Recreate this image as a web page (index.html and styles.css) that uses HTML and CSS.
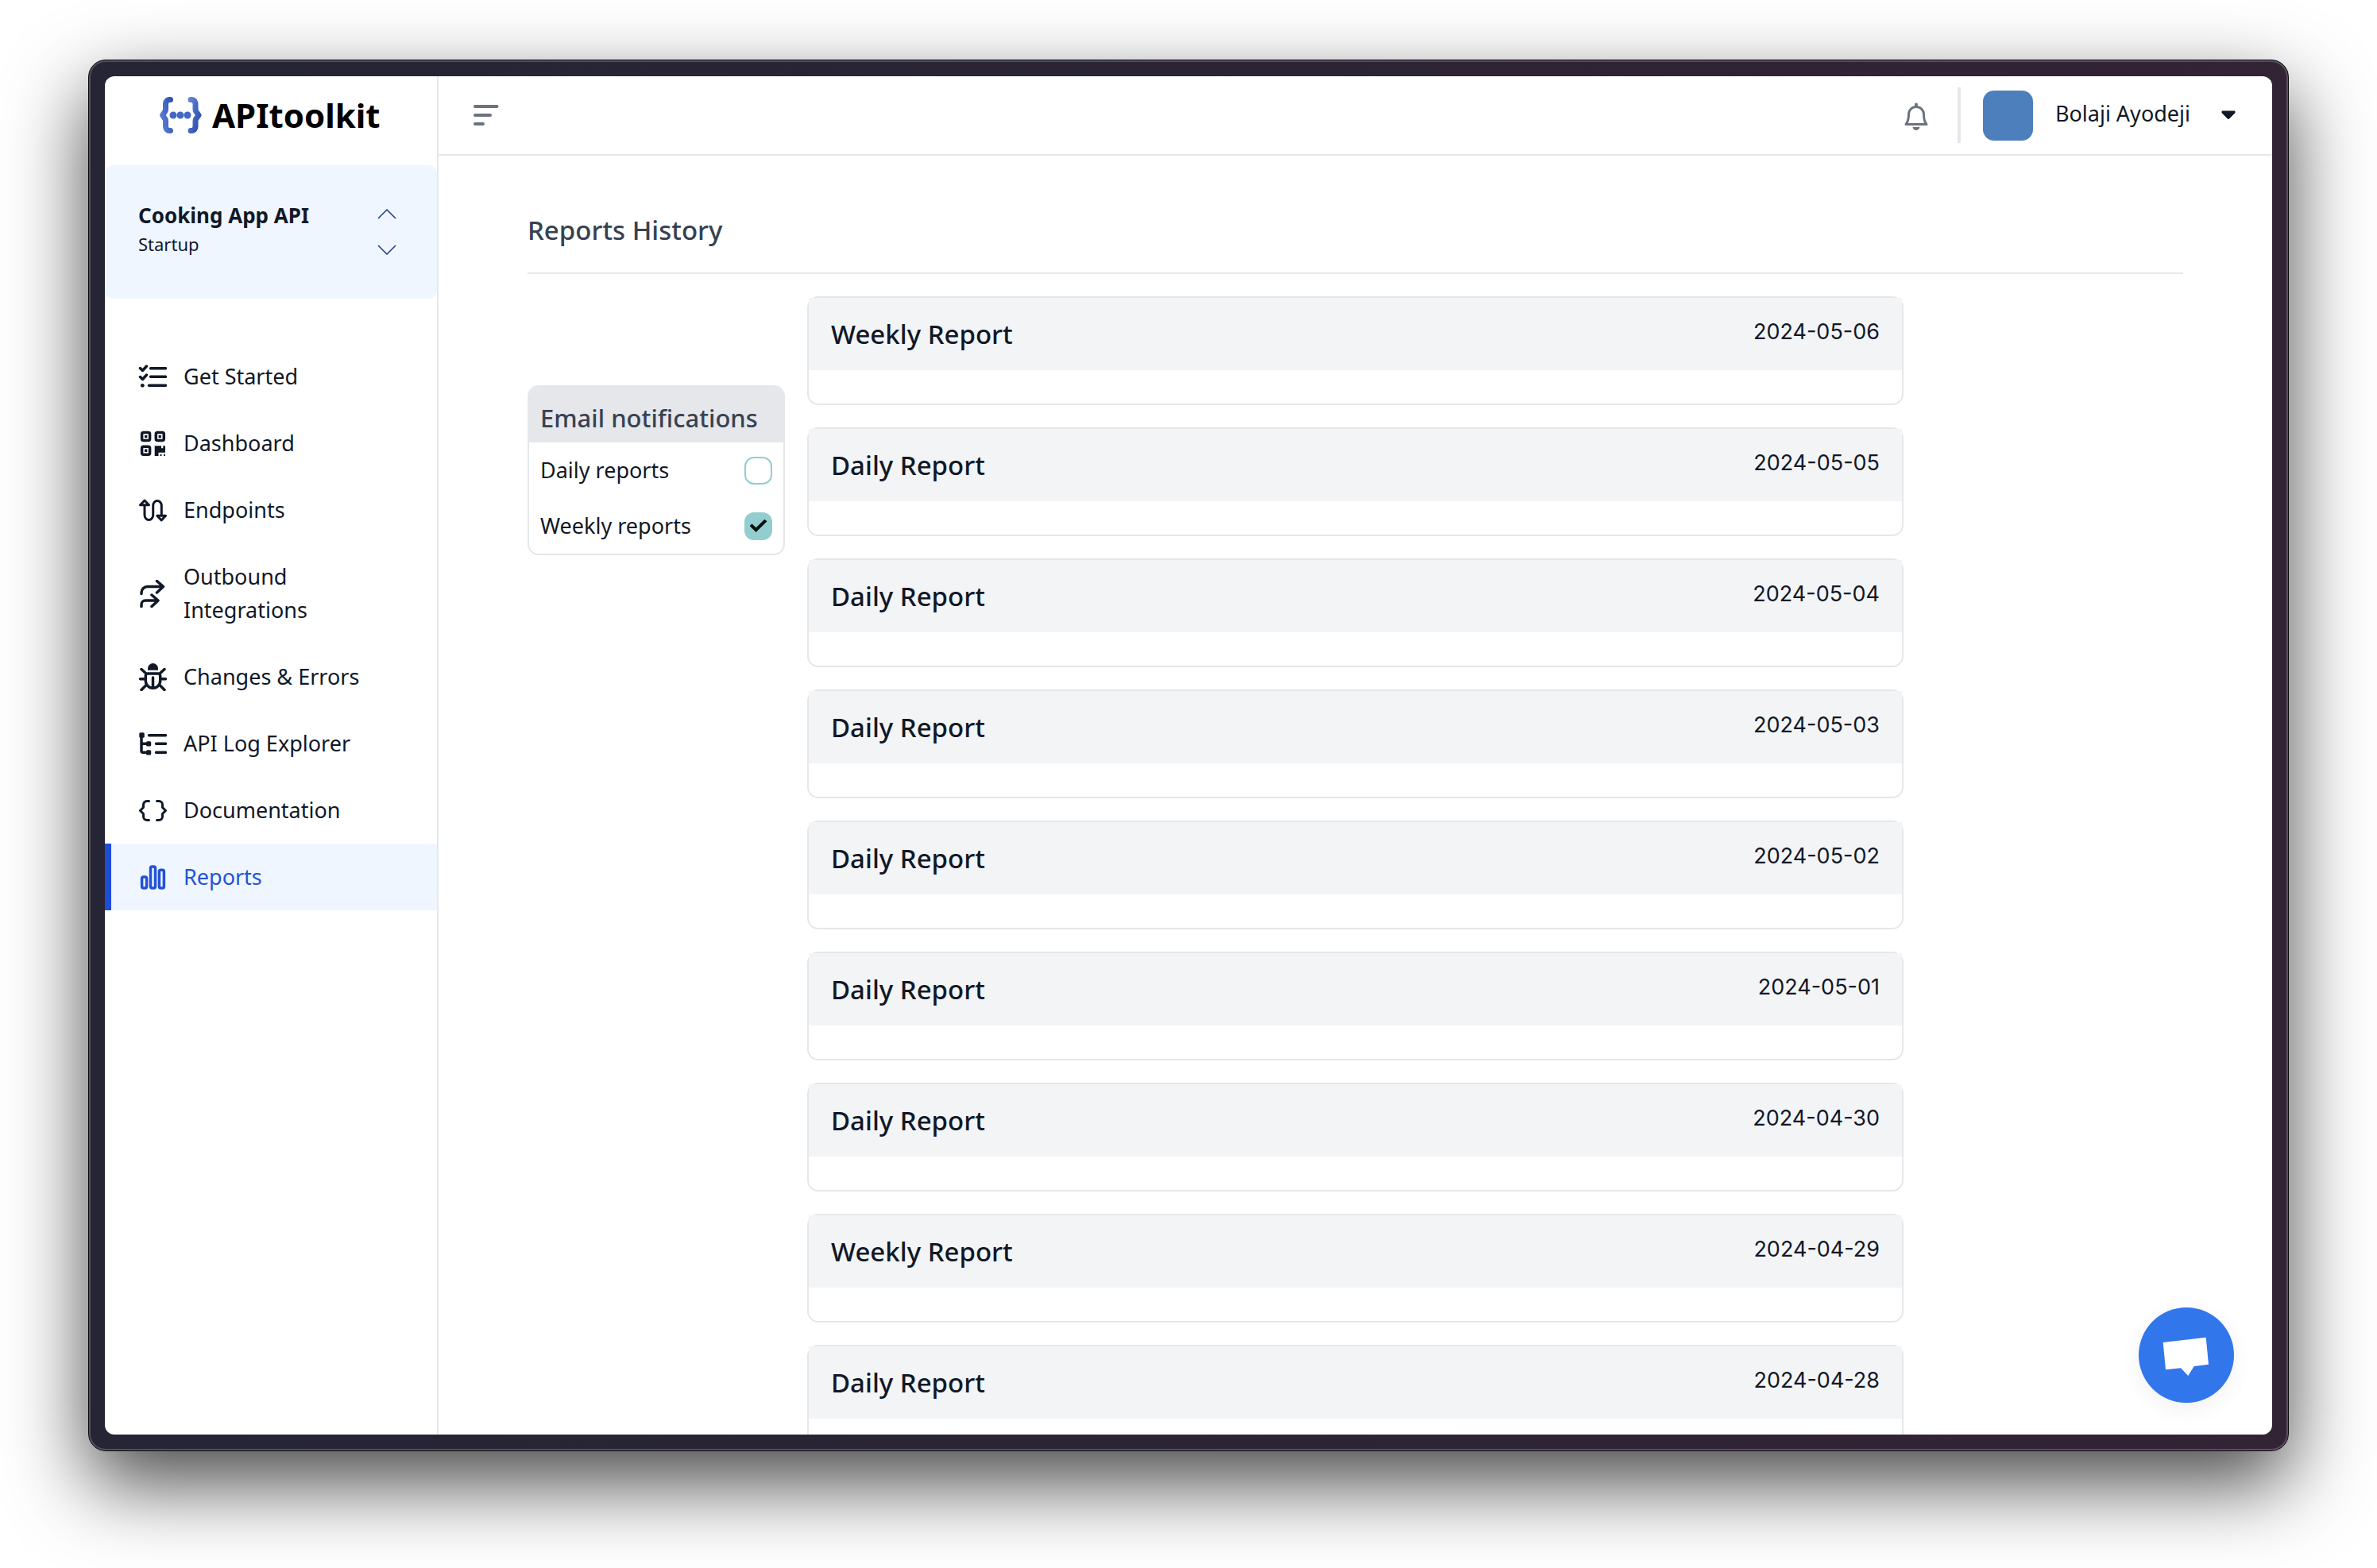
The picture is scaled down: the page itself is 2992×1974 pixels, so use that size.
FILE: index.html
```html
<!DOCTYPE html>
<html lang="en">
<head>
<meta charset="utf-8">
<title>APItoolkit – Reports History</title>
<link rel="stylesheet" href="styles.css">
</head>
<body>
<div class="frame">
<div class="app">
  <aside class="sidebar">
    <a class="logo" href="#">
      <svg class="logo-mark" viewBox="0 0 54 48" fill="none" aria-hidden="true">
        <defs>
          <linearGradient id="brandLeft" gradientUnits="userSpaceOnUse" x1="0" y1="24" x2="20" y2="20"><stop offset="0" stop-color="#5f80d4"/><stop offset="1" stop-color="#2c50b0"/></linearGradient>
          <linearGradient id="brandRight" gradientUnits="userSpaceOnUse" x1="34" y1="20" x2="54" y2="26"><stop offset="0" stop-color="#6283d6"/><stop offset="1" stop-color="#2c50b0"/></linearGradient>
        </defs>
        <path d="M14.5 4.500h-1c-3.500 0-5 2.500-5 5.500v6.500c0 2-.5 3-1.500 4L4.500 24 7 27.500c1 1 1.500 2 1.500 4V38c0 3 1.500 5.500 5 5.500h1" stroke="url(#brandLeft)" stroke-width="7" stroke-linecap="round" stroke-linejoin="round"/>
        <path d="M40 4.500h1c3.500 0 5 2.500 5 5.500v6.500c0 2 .5 3 1.500 4L50 24l-2.500 3.500c-1 1-1.500 2-1.500 4V38c0 3-1.500 5.500-5 5.500h-1" stroke="url(#brandRight)" stroke-width="7" stroke-linecap="round" stroke-linejoin="round"/>
        <g fill="#4468c4"><circle cx="18" cy="24" r="4.500"/><circle cx="27" cy="24" r="4.500"/><circle cx="36" cy="24" r="4.500"/></g>
      </svg>
      <span class="logo-text">APItoolkit</span>
    </a>
    <button class="project" type="button">
      <span class="project-info">
        <span class="project-name">Cooking App API</span>
        <span class="project-plan">Startup</span>
      </span>
      <svg class="project-arrows" viewBox="0 0 24 60" aria-hidden="true"><path d="M1 14 12 3l11 11M1 48l11 11 11-11"/></svg>
    </button>
    <nav class="nav">
      <a class="nav-item" href="#">
        <svg class="icon" viewBox="0 0 36 36" aria-hidden="true"><path d="m2.500 7.500 3 3L10.500 5M2.500 18.500l3 3 5-5.500M15.500 7.700h19M15.500 18.300h19M13.500 29.300h21"/><circle class="solid" cx="5.300" cy="29.300" r="2.400"/></svg>
        <span>Get Started</span>
      </a>
      <a class="nav-item" href="#">
        <svg class="icon" viewBox="0 0 36 36" aria-hidden="true"><rect x="4.600" y="4.600" width="10" height="10" rx="2"/><rect x="22.300" y="4.600" width="10" height="10" rx="2"/><rect x="4.600" y="22.300" width="10" height="10" rx="2"/><path class="solid" d="M8 8h3.300v3.300H8zM25.600 8h3.300v3.300h-3.300zM8 25.600h3.300v3.300H8zM20.700 21.300h8.300v3h2.300v-3H34v8.400h-8.500V34h-4.800zM27.500 32h2v2h-2zM32 32h2v2h-2z"/></svg>
        <span>Dashboard</span>
      </a>
      <a class="nav-item" href="#">
        <svg class="icon thin" viewBox="0 0 36 36" aria-hidden="true"><path d="M8 12v12.500a5.300 6 0 0 0 10.700 0v-12a5.300 6 0 0 1 10.600 0V25M8 6l5.500 5.700h-11zM29.200 31l5.300-5.700H23.700z"/></svg>
        <span>Endpoints</span>
      </a>
      <a class="nav-item" href="#">
        <svg class="icon" viewBox="0 0 36 36" aria-hidden="true"><path d="M4 18.500V17a7.500 7.500 0 0 1 7.500-7.500H31M23.500 2.500l8 7-8 7.500M4 34.500v-2.500a5 5 0 0 1 5-5h16M17 20l8 7-8 7.500"/></svg>
        <span>Outbound Integrations</span>
      </a>
      <a class="nav-item" href="#">
        <svg class="icon" viewBox="0 0 36 36" aria-hidden="true"><path class="solid" d="M12 9.700V7.500a6.500 6.500 0 0 1 13 0v2.200z"/><path d="M12 14h13c1.500 0 2.700 1.200 2.700 2.700V23a9.200 9.200 0 0 1-18.400 0v-6.300c0-1.500 1.200-2.700 2.700-2.700zM18.500 19v13M4 8.500l6.500 6M33 8.500l-6.500 6M2.500 20.700H9M34.500 20.700H28M4 34.500l6.500-6.500M33 34.500 26.500 28"/></svg>
        <span>Changes &amp; Errors</span>
      </a>
      <a class="nav-item" href="#">
        <svg class="icon" viewBox="0 0 36 36" aria-hidden="true"><g class="solid"><rect x="1.300" y="4.300" width="6.500" height="6.500" rx="1.500"/><rect x="10" y="15.300" width="6.200" height="6.200" rx="1.500"/><rect x="10" y="26.300" width="6.200" height="6.200" rx="1.500"/></g><path d="M4 8v19.300a2 2 0 0 0 2 2h5M4 18.300h7M13.500 7.700h21M22.500 18.300h12M22.500 29.300h12"/></svg>
        <span>API Log Explorer</span>
      </a>
      <a class="nav-item" href="#">
        <svg class="icon thin" viewBox="0 0 36 36" aria-hidden="true"><path d="M13.500 6.500H11A4.500 4.500 0 0 0 6.500 11v3.500L2.500 18.500l4 4V26a4.500 4.500 0 0 0 4.500 4.500h2.500M23.500 6.500H26a4.500 4.500 0 0 1 4.500 4.500v3.500l4 4-4 4V26a4.500 4.500 0 0 1-4.500 4.500h-2.500"/></svg>
        <span>Documentation</span>
      </a>
      <a class="nav-item active" href="#" aria-current="page">
        <svg class="icon thin" viewBox="0 0 36 36" aria-hidden="true"><rect x="4.600" y="17.900" width="6" height="14.200" rx="2"/><rect x="15.500" y="4.900" width="6" height="27.200" rx="2"/><rect x="26.400" y="9.300" width="6" height="22.800" rx="2"/></svg>
        <span>Reports</span>
      </a>
    </nav>
  </aside>

  <div class="main">
    <header class="topbar">
      <button class="menu-btn" type="button" aria-label="Toggle menu">
        <svg class="menu-icon" viewBox="0 0 32 26" aria-hidden="true"><path d="M2 2h27.500M2 13h19M2 24h10"/></svg>
      </button>
      <div class="topbar-right">
        <button class="bell-btn" type="button" aria-label="Notifications">
          <svg class="bell-icon" viewBox="0 0 32 36" aria-hidden="true"><path class="line" d="M3 27.500c2.500-3 3.500-6 3.500-12.500a9.500 9.500 0 0 1 19 0c0 6.500 1 9.500 3.500 12.500z"/><path d="M14 4V2.500a2 2 0 0 1 4 0V4zM11.500 31h9c-.5 2.500-2.500 4-4.500 4s-4-1.500-4.500-4z"/></svg>
        </button>
        <button class="account" type="button">
          <span class="avatar"></span>
          <span class="account-name">Bolaji Ayodeji</span>
          <svg class="caret" viewBox="0 0 18 12" aria-hidden="true"><path d="M1 1h16v2L9 11 1 3z"/></svg>
        </button>
      </div>
    </header>

    <main class="content">
      <h1 class="page-title">Reports History</h1>
      <div class="columns">
        <form class="panel">
          <h2 class="panel-title">Email notifications</h2>
          <label class="option"><span>Daily reports</span><input class="check" type="checkbox"></label>
          <label class="option"><span>Weekly reports</span><input class="check" type="checkbox" checked></label>
        </form>
        <div class="reports">
          <article class="report"><div class="report-head"><h3 class="report-title">Weekly Report</h3><time class="report-date">2024-05-06</time></div></article>
          <article class="report"><div class="report-head"><h3 class="report-title">Daily Report</h3><time class="report-date">2024-05-05</time></div></article>
          <article class="report"><div class="report-head"><h3 class="report-title">Daily Report</h3><time class="report-date">2024-05-04</time></div></article>
          <article class="report"><div class="report-head"><h3 class="report-title">Daily Report</h3><time class="report-date">2024-05-03</time></div></article>
          <article class="report"><div class="report-head"><h3 class="report-title">Daily Report</h3><time class="report-date">2024-05-02</time></div></article>
          <article class="report"><div class="report-head"><h3 class="report-title">Daily Report</h3><time class="report-date">2024-05-01</time></div></article>
          <article class="report"><div class="report-head"><h3 class="report-title">Daily Report</h3><time class="report-date">2024-04-30</time></div></article>
          <article class="report"><div class="report-head"><h3 class="report-title">Weekly Report</h3><time class="report-date">2024-04-29</time></div></article>
          <article class="report"><div class="report-head"><h3 class="report-title">Daily Report</h3><time class="report-date">2024-04-28</time></div></article>
        </div>
      </div>
    </main>
  </div>

  <button class="chat" type="button" aria-label="Open chat">
    <svg class="chat-icon" viewBox="0 0 120 120" aria-hidden="true"><path d="M30.700 44 84.700 37.700 88 71.700 69.700 74 62.300 86 53 76.300 34 78.300z"/></svg>
  </button>
</div>
</div>
</body>
</html>
```
FILE: styles.css
```css
*, *::before, *::after { box-sizing: border-box; }

body {
  margin: 0;
  height: 100vh;
  display: flex;
  padding: 75px 111px 147px;
  overflow: hidden;
  background: #fff;
  color: #111827;
  font: 400 27px/42px "Noto Sans", sans-serif;
}

h1, h2, h3 { margin: 0; font-weight: 500; }

button {
  margin: 0;
  padding: 0;
  border: 0;
  background: none;
  color: inherit;
  font: inherit;
  text-align: left;
  cursor: pointer;
}

a { color: inherit; text-decoration: none; }
svg { display: block; flex: none; }

/* Window frame */
.frame {
  flex: 1;
  min-width: 0;
  display: flex;
  padding: 20px;
  border: 1px solid #08080c;
  border-radius: 22px;
  background: linear-gradient(90deg, #252535, #322335);
  box-shadow: inset 0 0 0 2px rgba(255, 255, 255, .2), 0 40px 100px rgba(0, 0, 0, .72);
}

.app {
  position: relative;
  flex: 1;
  min-width: 0;
  display: flex;
  overflow: hidden;
  border-radius: 12px;
  background: #fff;
}

/* Sidebar */
.sidebar {
  flex: none;
  width: 420px;
  border-right: 2px solid #e5e7eb;
}

.logo {
  display: flex;
  align-items: center;
  gap: 13px;
  height: 98px;
  margin-bottom: 14px;
  padding-left: 68px;
}

.logo-mark { width: 54px; height: 48px; }
.logo-text { color: #000; font-size: 42px; font-weight: 700; }

.project {
  display: flex;
  align-items: center;
  justify-content: space-between;
  width: 100%;
  padding: 45px 51px 47px 42px;
  border-radius: 10px;
  background: #eff6ff;
}

.project-info { display: flex; flex-direction: column; }
.project-name { font-size: 26px; font-weight: 700; line-height: 36px; }
.project-plan { padding-bottom: 4px; font-size: 22px; line-height: 36px; }

.project-arrows {
  width: 24px;
  height: 60px;
  fill: none;
  stroke: #1e3a8a;
  stroke-width: 1.5;
}

.nav { margin-top: 56px; }

.nav-item {
  display: flex;
  align-items: center;
  gap: 21px;
  padding: 21px 80px 21px 34px;
  border-left: 8px solid transparent;
}

.nav-item.active {
  border-left-color: #1d4ed8;
  background: #eff6ff;
  color: #2352d6;
}

.icon {
  width: 36px;
  height: 36px;
  fill: none;
  stroke: currentColor;
  stroke-width: 3.5;
  stroke-linecap: round;
  stroke-linejoin: round;
}

.icon.thin { stroke-width: 3; }
.active .icon { stroke-width: 3.5; }
.icon .solid { fill: currentColor; stroke: none; }

/* Top bar */
.main { flex: 1; min-width: 0; }

.topbar {
  display: flex;
  align-items: center;
  justify-content: space-between;
  height: 100px;
  padding: 0 46px 0 44px;
  border-bottom: 2px solid #e5e7eb;
}

.menu-icon {
  width: 32px;
  height: 26px;
  fill: none;
  stroke: #6b7280;
  stroke-width: 4;
  stroke-linecap: round;
}

.topbar-right { display: flex; align-items: center; gap: 36px; }

.bell-btn { padding-top: 4px; }
.bell-icon { width: 32px; height: 36px; fill: #6b7280; }
.bell-icon .line { fill: none; stroke: #6b7280; stroke-width: 3; stroke-linejoin: round; }

.account {
  display: flex;
  align-items: center;
  height: 70px;
  padding-left: 28px;
  border-left: 4px solid #e5e7eb;
}

.avatar { width: 63px; height: 63px; border-radius: 14px; background: #4c7fbc; }
.account-name { padding: 0 39px 4px 28px; }
.caret { width: 18px; height: 12px; fill: #111827; stroke: #111827; stroke-linejoin: round; }

/* Page content */
.content { padding: 70px 112px 0; }

.page-title {
  padding-bottom: 30px;
  border-bottom: 2px solid #e5e7eb;
  color: #374151;
  font-size: 33px;
  line-height: 47px;
}

.columns {
  display: flex;
  align-items: flex-start;
  gap: 28px;
  padding-top: 28px;
}

.panel {
  flex: none;
  width: 324px;
  margin-top: 112px;
  overflow: hidden;
  border: 2px solid #e5e7eb;
  border-radius: 14px;
}

.panel-title {
  padding: 18px 14px 10px;
  background: #e5e7eb;
  color: #374151;
  font-size: 31px;
  line-height: 42px;
}

.option {
  display: flex;
  align-items: center;
  justify-content: space-between;
  height: 70px;
  padding: 0 14px;
}

.check {
  appearance: none;
  display: grid;
  place-items: center;
  width: 35px;
  height: 35px;
  margin: 0;
  border: 2px solid #93cdcf;
  border-radius: 12px;
}

.check:checked { background: #93cdcf; }

.check:checked::before {
  content: "";
  width: 22px;
  height: 18px;
  background: #0a1010;
  clip-path: polygon(0 50%, 14% 36%, 37% 62%, 86% 4%, 100% 18%, 37% 94%);
}

.reports {
  flex: 1;
  min-width: 0;
  max-width: 1380px;
  display: flex;
  flex-direction: column;
  gap: 28px;
}

.report {
  padding-bottom: 42px;
  border: 2px solid #e5e7eb;
  border-radius: 14px;
}

.report-head {
  display: flex;
  align-items: flex-start;
  justify-content: space-between;
  padding: 22px 28px;
  background: #f3f4f6;
}

.report-title { font-size: 33px; line-height: 47px; }
.report-date { font-family: Inter, sans-serif; font-size: 27px; line-height: 42px; }

/* Chat launcher floats over the page */
.chat {
  position: absolute;
  right: 48px;
  bottom: 40px;
  border-radius: 50%;
  background: #3276ec;
  box-shadow: 0 8px 28px rgba(0, 0, 0, .06);
}

.chat-icon { width: 120px; height: 120px; fill: #fff; }
```
